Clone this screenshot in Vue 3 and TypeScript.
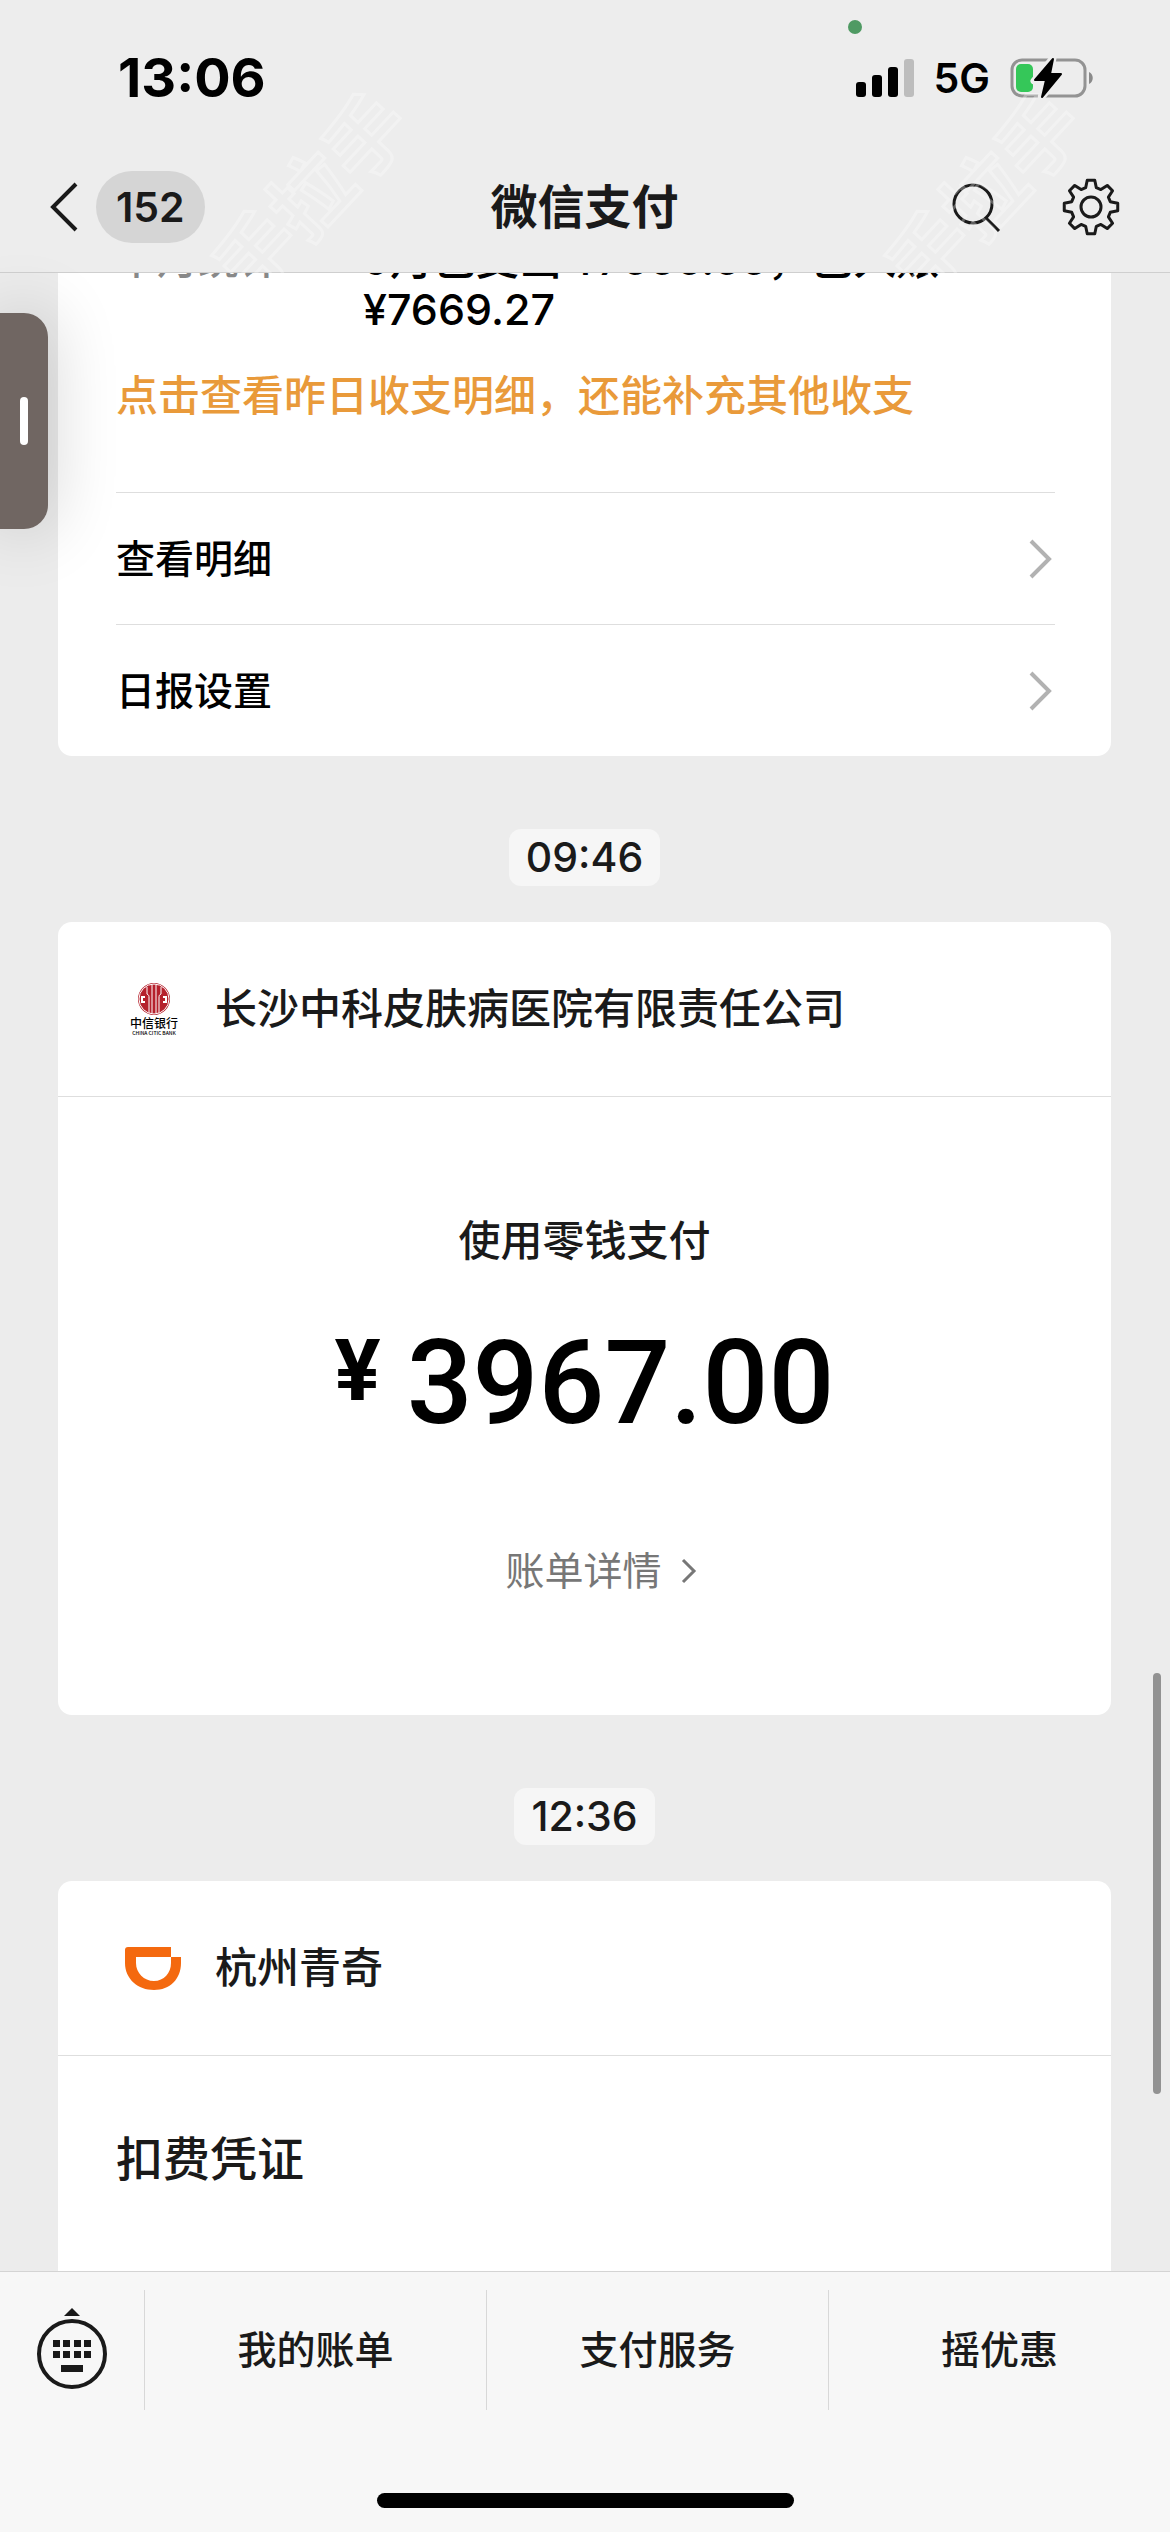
<script setup lang="ts">
interface MenuItem {
  label: string
}

const reportLinks: MenuItem[] = [{ label: '查看明细' }, { label: '日报设置' }]
const tabs: MenuItem[] = [{ label: '我的账单' }, { label: '支付服务' }, { label: '摇优惠' }]

const toothCount = 8

// Outline of the settings gear: rounded teeth around a 58-unit box.
function gearPath(): string {
  const points: string[] = []
  const step = (Math.PI * 2) / toothCount
  const corners: [number, number][] = [
    [-0.27, 20],
    [-0.14, 27],
    [0.14, 27],
    [0.27, 20],
  ]
  for (let i = 0; i < toothCount; i++) {
    for (const [offset, radius] of corners) {
      const angle = i * step + offset - Math.PI / 2
      points.push(`${(29 + radius * Math.cos(angle)).toFixed(2)} ${(29 + radius * Math.sin(angle)).toFixed(2)}`)
    }
  }
  return `M${points.join('L')}Z`
}

const gear = gearPath()
const keyColumns = [19, 29, 40, 50]
</script>

<template>
  <div class="screen">
    <header class="top">
      <div class="status">
        <time class="clock">13:06</time>
        <div class="signals">
          <svg class="bars" viewBox="0 0 58 38" aria-hidden="true">
            <rect x="0" y="23" width="10" height="15" rx="3" />
            <rect x="16" y="16" width="10" height="22" rx="3" />
            <rect x="32" y="8" width="10" height="30" rx="3" />
            <rect x="48" y="0" width="10" height="38" rx="3" fill="#bdbdbd" />
          </svg>
          <span class="network">5G</span>
          <svg class="battery" viewBox="0 0 84 44" aria-hidden="true">
            <rect x="2" y="4" width="73" height="36" rx="10" fill="none" stroke="#939393" stroke-width="3" />
            <path d="M79 16c5 2 5 10 0 12z" fill="#8a8a8a" />
            <rect x="6" y="8" width="17" height="28" rx="5" fill="#35c759" />
            <path d="M43 2 24 25h11l-4 17 21-25H40z" fill="#000" stroke="#eee" stroke-width="7" stroke-linejoin="round" />
            <path d="M43 3 25 24h11l-4 17 19-23H40z" fill="#000" stroke="#000" stroke-width="2" stroke-linejoin="round" />
          </svg>
        </div>
        <i class="privacy"></i>
      </div>
      <nav class="nav">
        <button class="back" type="button" aria-label="返回">
          <svg class="back-icon" viewBox="0 0 30 52" aria-hidden="true">
            <path d="M27 3 4 26l23 23" fill="none" stroke="#1a1a1a" stroke-width="4" />
          </svg>
          <span class="unread">152</span>
        </button>
        <h1 class="title">微信支付</h1>
        <div class="actions">
          <button class="icon-button" type="button" aria-label="搜索">
            <svg class="icon" viewBox="0 0 58 58" aria-hidden="true">
              <g fill="none" stroke="#1a1a1a" stroke-width="3">
                <circle cx="25" cy="26" r="19" />
                <path d="m38 40 13 13" />
              </g>
            </svg>
          </button>
          <button class="icon-button" type="button" aria-label="设置">
            <svg class="icon" viewBox="0 0 58 58" aria-hidden="true">
              <g fill="none" stroke="#1a1a1a" stroke-width="3" stroke-linejoin="round">
                <path :d="gear" />
                <circle cx="29" cy="29" r="10" />
              </g>
            </svg>
          </button>
        </div>
      </nav>
      <span class="watermark watermark-left" aria-hidden="true">手拉手</span>
      <span class="watermark watermark-right" aria-hidden="true">手拉手</span>
    </header>

    <main class="feed">
      <div class="messages">
        <article class="card report">
          <dl class="summary">
            <dt>本月统计</dt>
            <dd>9月已支出 ¥7666.66，已入账 ¥7669.27</dd>
          </dl>
          <p class="hint">点击查看昨日收支明细，还能补充其他收支</p>
          <a v-for="item in reportLinks" :key="item.label" class="row" href="#">
            <span>{{ item.label }}</span>
            <svg class="chevron" viewBox="0 0 28 44" aria-hidden="true">
              <path d="m4 4 18 18L4 40" fill="none" stroke="#b2b2b2" stroke-width="4" />
            </svg>
          </a>
        </article>

        <time class="stamp">09:46</time>

        <article class="card">
          <header class="merchant">
            <svg class="logo" viewBox="0 0 60 60" role="img" aria-label="中信银行">
              <circle cx="30" cy="20" r="16" fill="#b5202c" />
              <g fill="none" stroke="#fff" stroke-width="1">
                <circle cx="30" cy="20" r="15" />
                <path d="M23 8v7c2 1 2 2 2 4v15M37 8v7c-2 1-2 2-2 4v15M28 6v28M32 6v28" />
                <path d="M21 18h-3v5h3M39 18h3v5h-3" stroke-width="2" />
              </g>
              <text x="30" y="49" text-anchor="middle" font-size="12" font-weight="500">中信银行</text>
              <text x="30" y="56" text-anchor="middle" font-size="5" font-weight="500">CHINA CITIC BANK</text>
            </svg>
            <h2>长沙中科皮肤病医院有限责任公司</h2>
          </header>
          <div class="payment">
            <p class="method">使用零钱支付</p>
            <p class="amount"><span class="currency">¥</span><span>3967.00</span></p>
            <a class="details" href="#">
              <span>账单详情</span>
              <svg class="details-icon" viewBox="0 0 18 28" aria-hidden="true">
                <path d="m3 3 11 11L3 25" fill="none" stroke="#777" stroke-width="3" />
              </svg>
            </a>
          </div>
        </article>

        <time class="stamp">12:36</time>

        <article class="card">
          <header class="merchant">
            <svg class="logo" viewBox="0 0 60 60" role="img" aria-label="杭州青奇">
              <path fill="#f4690f" fill-rule="evenodd" d="M4 9h43v10h10v6C57 41 46 52 30 52S1 41 1 25V12q0-3 3-3zm8 10v6c0 10 8 18 18 18s17-8 17-18v-6z" />
            </svg>
            <h2>杭州青奇</h2>
          </header>
          <h3 class="voucher">扣费凭证</h3>
        </article>
      </div>
      <i class="scrollbar"></i>
    </main>

    <footer class="bottom">
      <div class="tabs">
        <button class="keyboard" type="button" aria-label="键盘">
          <svg class="keyboard-icon" viewBox="0 0 76 84" aria-hidden="true">
            <path d="m38 0 8 8H30z" fill="#1a1a1a" />
            <circle cx="38" cy="46" r="33" fill="none" stroke="#1a1a1a" stroke-width="4" />
            <g fill="#1a1a1a">
              <template v-for="x in keyColumns" :key="x">
                <rect :x="x" y="32" width="7" height="7" />
                <rect :x="x" y="43" width="7" height="7" />
              </template>
              <rect x="27" y="57" width="22" height="7" />
            </g>
          </svg>
        </button>
        <button v-for="tab in tabs" :key="tab.label" class="tab" type="button">{{ tab.label }}</button>
      </div>
      <i class="home"></i>
    </footer>

    <button class="handle" type="button" aria-label="展开侧栏"><i></i></button>
  </div>
</template>

<style>
body {
  background: #ececec;
}
</style>

<style scoped>
.screen {
  position: relative;
  display: flex;
  flex-direction: column;
  height: 100vh;
  overflow: hidden;
  background: #ececec;
  color: #1a1a1a;
  font-family: Inter, "Noto Sans CJK SC", sans-serif;
  font-size: 39px;
  font-weight: 500;
  line-height: 60px;
}

.screen * {
  box-sizing: border-box;
}

h1,
h2,
h3,
p,
dl,
dd {
  margin: 0;
}

button {
  padding: 0;
  border: 0;
  background: none;
  color: inherit;
  font: inherit;
}

a {
  color: inherit;
  text-decoration: none;
}

svg {
  display: block;
  flex: none;
}

.top {
  position: relative;
  z-index: 1;
  flex: none;
  border-bottom: 1px solid #cfcfcf;
  background: #ededed;
}

.status {
  position: relative;
  display: flex;
  align-items: center;
  justify-content: space-between;
  height: 142px;
  padding: 14px 76px 0 118px;
}

.clock {
  color: #000;
  font-size: 54px;
  font-weight: 700;
}

.signals {
  display: flex;
  align-items: center;
  gap: 20px;
}

.bars {
  width: 58px;
  height: 38px;
}

.network {
  color: #000;
  font-size: 41px;
  font-weight: 600;
}

.battery {
  width: 84px;
  height: 44px;
}

.privacy {
  position: absolute;
  top: 20px;
  right: 308px;
  width: 14px;
  height: 14px;
  border-radius: 50%;
  background: #4f9a63;
}

.nav {
  display: grid;
  grid-template-columns: 1fr auto 1fr;
  align-items: center;
  height: 130px;
  padding: 0 50px 0 49px;
}

.back {
  display: flex;
  align-items: center;
  gap: 17px;
}

.back-icon {
  width: 30px;
  height: 52px;
}

.unread {
  padding: 0 20px;
  border-radius: 36px;
  background: #d5d5d5;
  font-size: 41px;
  font-weight: 600;
  line-height: 72px;
}

.title {
  font-size: 47px;
  font-weight: 700;
}

.actions {
  display: flex;
  justify-content: flex-end;
  gap: 56px;
}

.icon {
  width: 58px;
  height: 58px;
}

.watermark {
  position: absolute;
  top: 156px;
  color: transparent;
  font-size: 80px;
  font-weight: 700;
  line-height: 80px;
  white-space: nowrap;
  pointer-events: none;
  transform: rotate(-47deg);
  -webkit-text-stroke: 3px rgba(255, 255, 255, 0.3);
}

.watermark-left {
  left: 192px;
}

.watermark-right {
  right: 65px;
}

.feed {
  position: relative;
  flex: 1;
  min-height: 0;
  overflow: hidden;
}

/* The list rests scrolled, its first card partly under the top bar. */
.messages {
  display: flex;
  flex-direction: column;
  align-items: center;
  margin-top: -83px;
  padding: 0 59px 0 58px;
}

.card {
  align-self: stretch;
  border-radius: 14px;
  background: #fff;
}

.report {
  padding: 44px 56px 0 58px;
}

.summary {
  display: flex;
  color: #000;
  font-size: 41px;
  line-height: 50px;
}

.summary dt {
  width: 247px;
  flex: none;
  color: #888;
}

.summary dd {
  flex: 1;
  font-size: 43px;
}

.hint {
  margin: 32px 0 66px;
  color: #e99a3a;
  font-size: 42px;
}

.row {
  display: flex;
  align-items: center;
  justify-content: space-between;
  height: 132px;
  border-top: 1px solid #dedede;
  color: #000;
}

.chevron {
  width: 28px;
  height: 44px;
}

.stamp {
  margin: 73px 0 36px;
  padding: 0 17px;
  border-radius: 12px;
  background: #f6f6f6;
  font-size: 41px;
  line-height: 57px;
}

.merchant {
  display: flex;
  align-items: center;
  gap: 31px;
  height: 175px;
  padding: 0 66px;
  border-bottom: 1px solid #dedede;
}

.logo {
  width: 60px;
  height: 60px;
  font-family: "Noto Sans CJK SC", sans-serif;
}

.merchant h2 {
  font-size: 42px;
  font-weight: 500;
}

.payment {
  display: flex;
  flex-direction: column;
  align-items: center;
  padding: 114px 0;
}

.method {
  font-size: 42px;
}

.amount {
  display: flex;
  align-items: flex-start;
  gap: 26px;
  margin: 42px 0 88px;
  color: #000;
  font-family: Roboto, sans-serif;
  font-size: 116px;
  line-height: 140px;
}

.currency {
  font-size: 86px;
  font-weight: 700;
  line-height: 116px;
}

.details {
  display: flex;
  align-items: center;
  gap: 18px;
  padding-left: 34px;
  color: #777;
  font-weight: 400;
}

.details-icon {
  width: 18px;
  height: 28px;
}

.voucher {
  padding: 68px 58px 120px;
  font-size: 47px;
  font-weight: 500;
  line-height: 70px;
}

.scrollbar {
  position: absolute;
  top: 1400px;
  right: 9px;
  width: 8px;
  height: 421px;
  border-radius: 4px;
  background: #929292;
}

.bottom {
  flex: none;
  border-top: 1px solid #d4d4d4;
  background: #f7f7f7;
}

.tabs {
  display: grid;
  grid-template-columns: 144px 1fr 1fr 1fr;
  height: 120px;
  margin: 18px 0 83px;
}

.keyboard {
  display: flex;
  align-items: center;
  justify-content: center;
}

.keyboard-icon {
  width: 76px;
  height: 84px;
}

.tab {
  border-left: 1px solid #d8d8d8;
}

.home {
  display: block;
  width: 417px;
  height: 15px;
  margin: 0 auto 24px;
  border-radius: 8px;
  background: #000;
}

.handle {
  position: absolute;
  z-index: 2;
  top: 313px;
  left: 0;
  display: flex;
  align-items: center;
  justify-content: flex-end;
  width: 48px;
  height: 216px;
  padding-right: 20px;
  border-radius: 0 24px 24px 0;
  background: #706662;
  box-shadow: 0 0 70px rgba(0, 0, 0, 0.2);
}

.handle i {
  width: 8px;
  height: 48px;
  border-radius: 4px;
  background: #fff;
}
</style>
